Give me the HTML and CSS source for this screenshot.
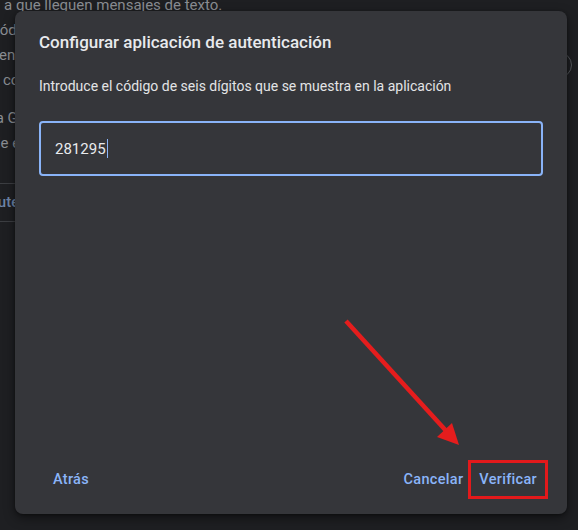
FILE: index.html
```html
<!DOCTYPE html>
<html lang="es">
<head>
<meta charset="utf-8">
<title>Configurar aplicación de autenticación</title>
<link rel="stylesheet" href="styles.css">
</head>
<body>
<div class="page">
  <p class="bg-line l1">a que lleguen mensajes de texto.</p>
  <p class="bg-line l2">Códigos de verificación</p>
  <p class="bg-line l3">entes</p>
  <p class="bg-line l4">codigo</p>
  <p class="bg-line l5">la Google</p>
  <p class="bg-line l6">de el</p>
  <div class="bg-rule"></div>
  <p class="bg-link">Autenticador</p>
  <div class="bg-rule"></div>
  <span class="bg-circle"></span>
</div>

<div class="dialog" role="dialog">
  <h1 class="title">Configurar aplicación de autenticación</h1>
  <p class="desc">Introduce el código de seis dígitos que se muestra en la aplicación</p>
  <div class="field"><span class="value">281295</span><span class="caret"></span></div>
  <div class="spacer"></div>
  <div class="actions">
    <button class="btn">Atrás</button>
    <div class="right">
      <button class="btn">Cancelar</button>
      <button class="btn verify">Verificar</button>
    </div>
  </div>
</div>

<svg class="arrow" width="578" height="530" viewBox="0 0 578 530">
  <line x1="346" y1="321" x2="449" y2="434" stroke="#e51d1d" stroke-width="4.5" stroke-linecap="butt"/>
  <polygon points="459,445 437,437 452,423" fill="#e51d1d"/>
</svg>
</body>
</html>
```

FILE: styles.css
```css
html, body {
  margin: 0;
  padding: 0;
}
body {
  width: 578px;
  height: 530px;
  overflow: hidden;
  background: #1e1f22;
  font-family: Roboto, "Noto Sans", Arial, sans-serif;
  position: relative;
}
.page {
  color: #8a8d92;
  font-size: 15px;
  line-height: 25px;
}
.bg-line {
  margin: 0;
  white-space: nowrap;
}
.l1 { margin-top: -7.5px; padding-left: 4px; }
.l2 { margin-left: -10px; }
.l3 { margin-left: -1px; }
.l4 { margin-left: 3px; }
.l5 { margin-left: -8px; margin-top: 13px; }
.l6 { margin-left: -8px; }
.bg-rule {
  height: 1px;
  background: #3c3e42;
  margin-top: 27px;
  width: 100px;
}
.bg-link {
  margin: 6px 0 0 -12px;
  color: #6f86a8;
  font-weight: 500;
  font-size: 15px;
  line-height: 24px;
}
.bg-link + .bg-rule { margin-top: 7px; }
.bg-circle {
  position: absolute;
  left: 546px;
  top: 52px;
  width: 24px;
  height: 24px;
  border: 1.5px solid #55585d;
  border-radius: 50%;
}

.dialog {
  position: absolute;
  left: 15px;
  top: 11px;
  width: 552px;
  height: 503px;
  box-sizing: border-box;
  padding: 19px 24px 14px 24px;
  background: #35363a;
  border-radius: 8px;
  box-shadow: 0 4px 12px rgba(0, 0, 0, 0.45), 0 1px 3px rgba(0, 0, 0, 0.35);
  display: flex;
  flex-direction: column;
}
.title {
  margin: 0;
  font-size: 17px;
  line-height: 24px;
  font-weight: 500;
  color: #e8eaed;
}
.desc {
  margin: 22px 0 0 0;
  font-size: 14px;
  line-height: 20px;
  color: #e3e4e6;
}
.field {
  margin-top: 25px;
  height: 55px;
  box-sizing: border-box;
  border: 2px solid #8ab4f8;
  border-radius: 4px;
  padding-left: 14px;
  display: flex;
  align-items: center;
  font-size: 15px;
  color: #e8eaed;
}
.caret {
  display: inline-block;
  width: 1px;
  height: 19px;
  background: #8ab4f8;
  margin-left: 1px;
}
.spacer { flex: 1; }
.actions {
  display: flex;
  justify-content: space-between;
  align-items: center;
  height: 39px;
  margin-right: -5px;
  margin-bottom: 1px;
}
.right {
  display: flex;
  align-items: center;
  gap: 5px;
}
.btn {
  background: none;
  border: 0;
  padding: 0 14px;
  height: 39px;
  font-family: inherit;
  font-size: 14.5px;
  font-weight: 500;
  letter-spacing: 0.3px;
  color: #8ab4f8;
}
.right .btn { padding: 0; }
.btn.verify {
  border: 3px solid #e3191b;
  padding: 0 8px;
  box-sizing: border-box;
}
.arrow {
  position: absolute;
  left: 0;
  top: 0;
  pointer-events: none;
}
```
